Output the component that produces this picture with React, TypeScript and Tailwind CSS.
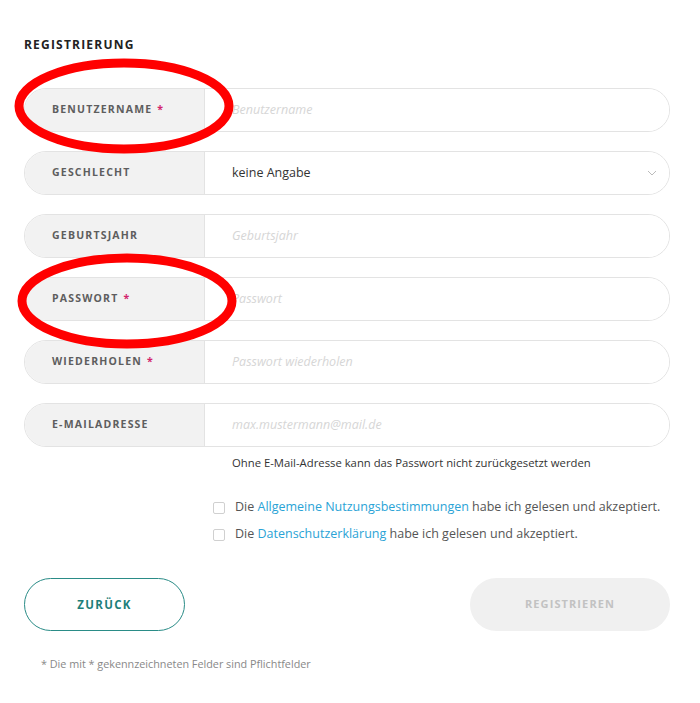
import React from 'react';

type Field = {
    label: string;
    required?: boolean;
    placeholder?: string;
    value?: string;
    select?: boolean;
};

const fields: Field[] = [
    { label: 'BENUTZERNAME', required: true, placeholder: 'Benutzername' },
    { label: 'GESCHLECHT', value: 'keine Angabe', select: true },
    { label: 'GEBURTSJAHR', placeholder: 'Geburtsjahr' },
    { label: 'PASSWORT', required: true, placeholder: 'Passwort' },
    { label: 'WIEDERHOLEN', required: true, placeholder: 'Passwort wiederholen' },
    { label: 'E-MAILADRESSE', placeholder: 'max.mustermann@mail.de' },
];

function Row({ field }: { field: Field }) {
    return (
        <div className="flex h-[44px] rounded-full border border-[#e3e3e3] overflow-hidden">
            <div className="w-[180px] shrink-0 bg-[#f2f2f2] border-r border-[#e3e3e3] flex items-center pl-[27px] text-[10.5px] font-bold tracking-[1.2px] text-[#5e5e5e]">
                {field.label}
                {field.required && <span className="ml-[5px] text-[#d2246c]">*</span>}
            </div>
            <div className="flex-1 flex items-center pl-[27px] pr-[12px] bg-white">
                {field.select ? (
                    <>
                        <span className="flex-1 text-[12.5px] text-[#333]">{field.value}</span>
                        <svg width="10" height="6" viewBox="0 0 10 6" fill="none" stroke="#bbb" strokeWidth="1">
                            <path d="M1 1l4 4 4-4" />
                        </svg>
                    </>
                ) : (
                    <span className="text-[12.5px] italic text-[#d6d6d6]">{field.placeholder}</span>
                )}
            </div>
        </div>
    );
}

function Checkbox({ link }: { link: string }) {
    return (
        <div className="flex items-center gap-[10px] h-[27px] whitespace-nowrap">
            <span className="w-[12px] h-[12px] shrink-0 border border-[#d0d0d0] rounded-[2px] bg-white" />
            <span className="text-[12.5px] text-[#555]">
                Die <span className="text-[#2aa3d6]">{link}</span> habe ich gelesen und akzeptiert.
            </span>
        </div>
    );
}

export default function App() {
    return (
        <div className="relative w-[700px] h-[703px] bg-white font-['Open_Sans',sans-serif] pl-6 pr-[30px] pt-[36px]">
            <h1 className="text-[12px] font-bold tracking-[1.2px] text-[#222] leading-[18px]">REGISTRIERUNG</h1>

            <div className="mt-[34px] flex flex-col gap-[19px]">
                {fields.map((f) => (
                    <Row key={f.label} field={f} />
                ))}
            </div>

            <p className="ml-[208px] mt-[7px] text-[11.3px] text-[#333] leading-[18px]">
                Ohne E-Mail-Adresse kann das Passwort nicht zurückgesetzt werden
            </p>

            <div className="ml-[189px] mt-[22px] flex flex-col">
                <Checkbox link="Allgemeine Nutzungsbestimmungen" />
                <Checkbox link="Datenschutzerklärung" />
            </div>

            <div className="mt-[30px] flex justify-between">
                <button className="w-[161px] h-[53px] rounded-full border-[1.5px] border-[#2a8c87] text-[#1d7f7a] text-[11.5px] font-bold tracking-[1.3px] bg-white">
                    ZURÜCK
                </button>
                <button className="w-[200px] h-[53px] rounded-full bg-[#f0f0f0] text-[#c2c2c2] text-[11px] font-bold tracking-[1.1px]">
                    REGISTRIEREN
                </button>
            </div>

            <p className="ml-[17px] mt-[25px] text-[10.8px] text-[#888] leading-[16px]">
                * Die mit * gekennzeichneten Felder sind Pflichtfelder
            </p>

            <svg className="absolute left-0 top-0 pointer-events-none" width="700" height="703">
                <ellipse cx="124" cy="106" rx="105" ry="43" fill="none" stroke="#f00" strokeWidth="9" />
                <ellipse cx="127" cy="301" rx="105" ry="43" fill="none" stroke="#f00" strokeWidth="9" />
            </svg>
        </div>
    );
}
